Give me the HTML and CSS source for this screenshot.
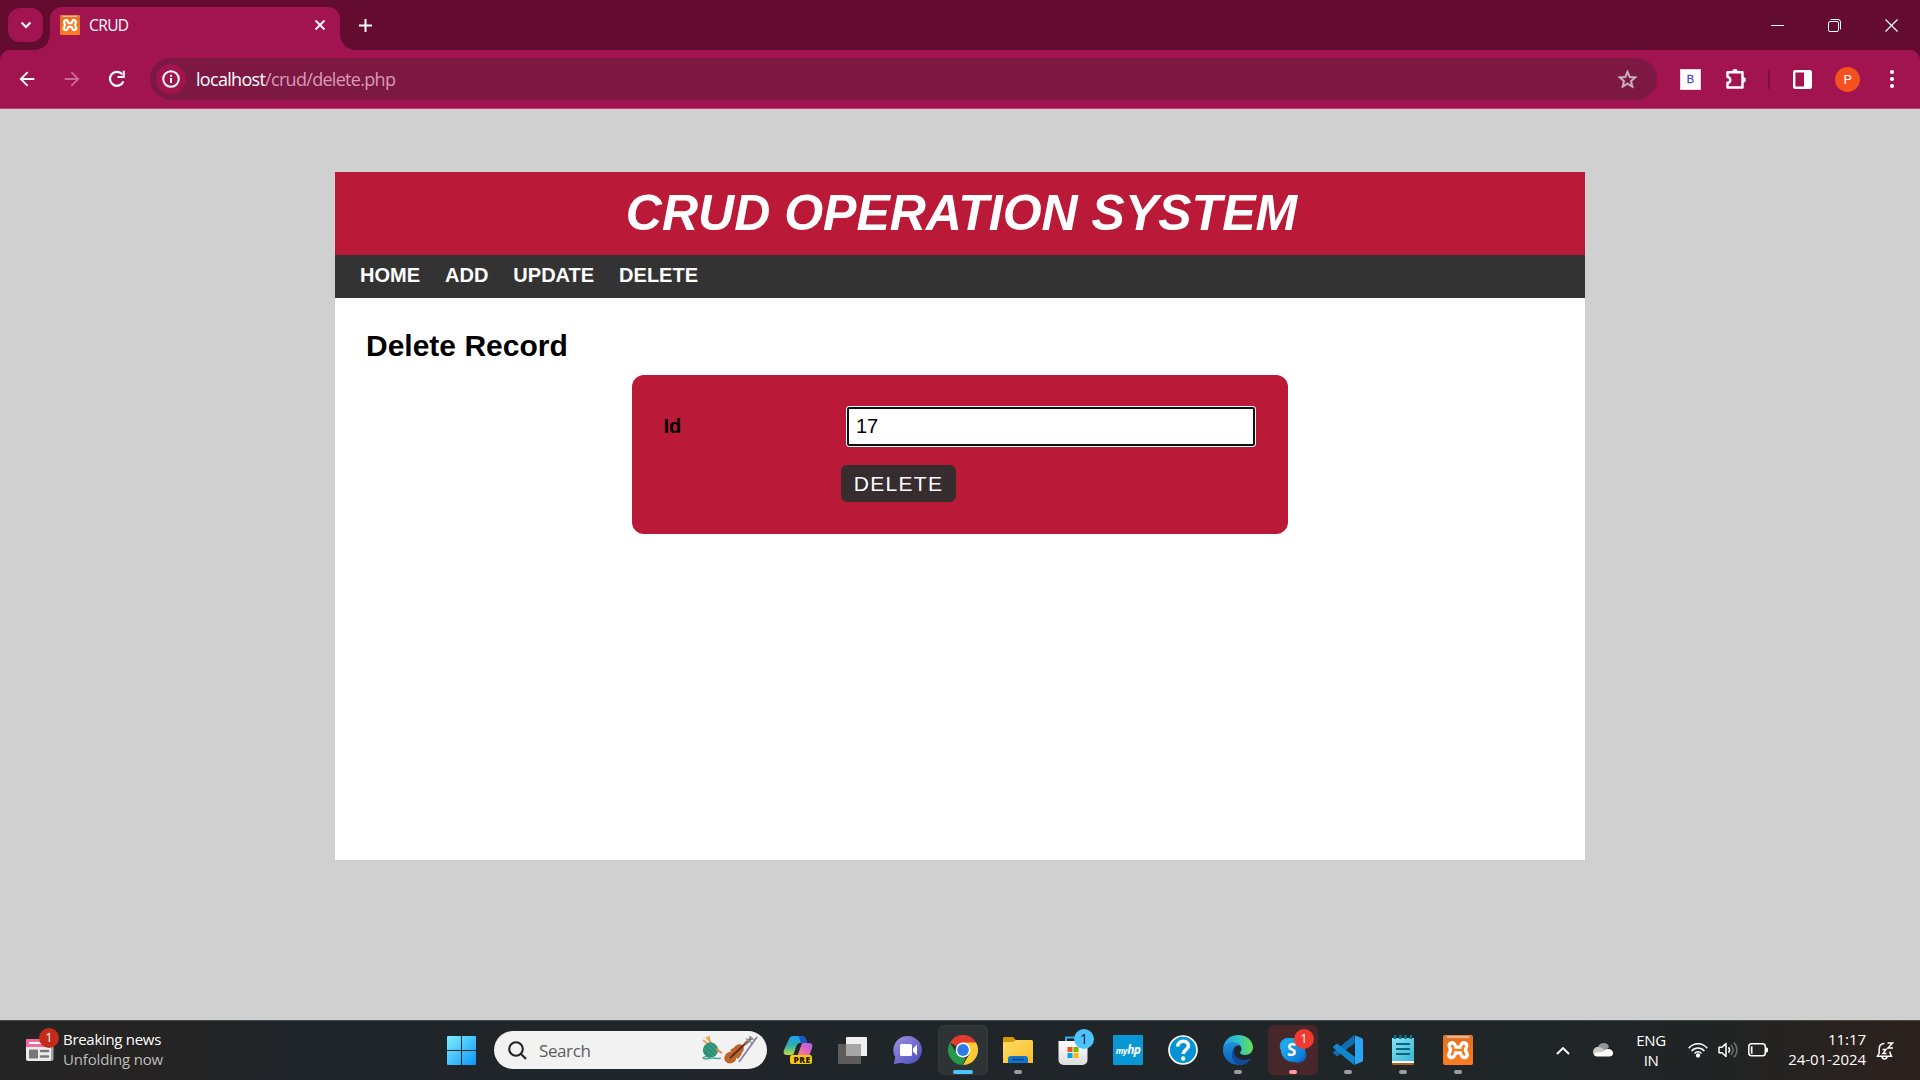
FILE: index.html
```html
<!DOCTYPE html>
<html lang="en">
<head>
<meta charset="utf-8">
<title>CRUD</title>
<link rel="stylesheet" href="styles.css">
</head>
<body>
<svg width="0" height="0" class="defs">
  <defs>
    <linearGradient id="win" x1="0" y1="0" x2="1" y2="1"><stop offset="0" stop-color="#7ff0ff"/><stop offset="1" stop-color="#0a94f8"/></linearGradient>
    <linearGradient id="orange" x1="0" y1="0" x2="0" y2="1"><stop offset="0" stop-color="#d5864a"/><stop offset=".18" stop-color="#ea6f1c"/><stop offset="1" stop-color="#fb7d22"/></linearGradient>
    <linearGradient id="copA" x1="0" y1="0" x2="0" y2="1"><stop offset="0" stop-color="#22a0ee"/><stop offset=".5" stop-color="#2bb0b0"/><stop offset="1" stop-color="#c4dc3a"/></linearGradient>
    <linearGradient id="copB" x1="1" y1="0" x2="0" y2="1"><stop offset="0" stop-color="#a65cf0"/><stop offset=".5" stop-color="#e368b8"/><stop offset="1" stop-color="#ff8a60"/></linearGradient>
    <linearGradient id="chat" x1="0" y1="0" x2="1" y2="1"><stop offset="0" stop-color="#a291df"/><stop offset="1" stop-color="#454bbd"/></linearGradient>
    <linearGradient id="folder" x1="0" y1="0" x2="1" y2="1"><stop offset="0" stop-color="#ffdc69"/><stop offset="1" stop-color="#f9bd25"/></linearGradient>
    <linearGradient id="edgeA" x1="0" y1="0" x2="1" y2="0"><stop offset="0" stop-color="#229fe3"/><stop offset=".5" stop-color="#31c4c7"/><stop offset="1" stop-color="#68e14d"/></linearGradient>
    <linearGradient id="edgeB" x1="0" y1="0" x2="0" y2="1"><stop offset="0" stop-color="#1b91dc"/><stop offset="1" stop-color="#0d62bd"/></linearGradient>
    <linearGradient id="note" x1="0" y1="0" x2="1" y2="1"><stop offset="0" stop-color="#86e3f4"/><stop offset="1" stop-color="#37b5d1"/></linearGradient>
    <linearGradient id="bag" x1="0" y1="0" x2="0" y2="1"><stop offset="0" stop-color="#fff"/><stop offset="1" stop-color="#dcdcdc"/></linearGradient>
    <linearGradient id="sky" x1="0" y1="0" x2="1" y2="1"><stop offset="0" stop-color="#27b8f2"/><stop offset="1" stop-color="#0870cd"/></linearGradient>
    <symbol id="xampp" viewBox="0 0 30 30">
      <rect width="30" height="30" rx="2" fill="url(#orange)"/>
      <path d="M4 2h22" stroke="#efc5a5" stroke-width="1.500"/>
      <g fill="none" stroke-linecap="round" stroke-linejoin="round">
        <path d="M9 10.500Q12 15 8.500 19.800M21 10.500Q18 15 21.500 19.800M10.500 15h9" stroke="#fff" stroke-width="9"/>
        <path d="M9.200 10.800Q12 15 8.700 19.500M20.800 10.800Q18 15 21.300 19.500M11 15h8" stroke="#f37a22" stroke-width="2.500"/>
      </g>
    </symbol>
  </defs>
</svg>

<header class="tabstrip">
  <button class="tab-search"><svg width="12" height="8" viewBox="0 0 12 8" fill="none" stroke="#fff" stroke-width="2"><path d="M1.500 1.500 6 6l4.500-4.500"/></svg></button>
  <div class="tab">
    <svg class="favicon" width="20" height="20"><use href="#xampp"/></svg>
    <span class="tab-title">CRUD</span>
    <svg class="tab-close" width="12" height="12" viewBox="0 0 12 12" stroke="#fff" stroke-width="1.800"><path d="m1.500 1.500 9 9m0-9-9 9"/></svg>
  </div>
  <svg class="new-tab" width="13" height="13" viewBox="0 0 13 13" stroke="#fff" stroke-width="2"><path d="M6.500 0v13M0 6.500h13"/></svg>
  <div class="window-controls">
    <svg width="13" height="13" viewBox="0 0 13 13" stroke="#fff"><path d="M0 6.500h13"/></svg>
    <svg width="13" height="13" viewBox="0 0 13 13" stroke="#fff" fill="none"><rect x=".5" y="2.500" width="10" height="10" rx="1.500"/><path d="M2.500.5H10A2.500 2.500 0 0 1 12.500 3v7.500"/></svg>
    <svg width="13" height="13" viewBox="0 0 13 13" stroke="#fff" stroke-width="1.200"><path d="m.5.5 12 12m0-12-12 12"/></svg>
  </div>
</header>

<div class="toolbar-wrap">
<div class="toolbar">
  <svg class="nav-icon" viewBox="0 0 24 24"><path d="M20 10.800H7.800l5.600-5.600L12 3.800 3.800 12l8.200 8.200 1.400-1.400-5.600-5.600H20z"/></svg>
  <svg class="nav-icon dim" viewBox="0 0 24 24"><path d="m12 3.800-1.400 1.400 5.600 5.600H4v2.400h12.200l-5.600 5.600 1.400 1.400 8.200-8.200z"/></svg>
  <svg class="nav-icon" viewBox="0 0 24 24" fill="none"><path d="M19 14.500A7.600 7.600 0 1 1 17.800 7" fill="none" stroke="#fff" stroke-width="2.400"/><path d="M20.500 3v8h-8V8.800h5.800V3z"/></svg>
  <div class="omnibox">
    <span class="site-info"><svg width="18" height="18" viewBox="0 0 18 18" fill="none" stroke="#fff" stroke-width="2"><circle cx="9" cy="9" r="7.800"/><path d="M9 8v5M9 4.700v2"/></svg></span>
    <span class="url"><b>localhost</b>/crud/delete.php</span>
    <svg class="star" width="23" height="23" viewBox="0 0 24 24" fill="#cbb7c0" stroke="#cbb7c0" stroke-width=".5"><path d="m22 9.240-7.190-.62L12 2 9.190 8.630 2 9.240l5.460 4.730L5.820 21 12 17.270 18.180 21l-1.630-7.030zM12 15.400l-3.760 2.270 1-4.280-3.320-2.880 4.380-.38L12 6.100l1.710 4.040 4.380.38-3.320 2.880 1 4.280z"/></svg>
  </div>
  <span class="ext-b">B</span>
  <svg class="puzzle" width="22" height="22" viewBox="0 0 22 22"><path d="M2.500 4.200h15v15.300h-15V14.800c1.500 0 2.800-1.200 2.800-2.900S4 9 2.500 9z" fill="none" stroke="#fff" stroke-width="2.400" stroke-linejoin="round"/><path d="M7.200 4a2.800 3 0 0 1 5.600 0zM18 9a2.800 2.800 0 0 1 0 5.600z" fill="#fff"/></svg>
  <span class="sep"></span>
  <svg class="panel-icon" width="19" height="19" viewBox="0 0 19 19"><rect x="1.200" y="1.200" width="16.600" height="16.600" rx="1" fill="none" stroke="#fff" stroke-width="2.400"/><path d="M11 1h7v17h-7z" fill="#fff"/></svg>
  <span class="avatar">P</span>
  <svg class="menu" width="6" height="20" viewBox="0 0 6 20" fill="#fff"><circle cx="3" cy="3" r="2.100"/><circle cx="3" cy="10" r="2.100"/><circle cx="3" cy="17" r="2.100"/></svg>
</div>
</div>

<main class="viewport">
  <div class="wrapper">
    <div class="site-header"><h1>CRUD OPERATION SYSTEM</h1></div>
    <nav class="site-menu"><a>HOME</a><a>ADD</a><a>UPDATE</a><a>DELETE</a></nav>
    <section class="content">
      <h2>Delete Record</h2>
      <form class="post-form">
        <div class="field"><label>Id</label><div class="input">17</div></div>
        <button type="button" class="submit">DELETE</button>
      </form>
    </section>
  </div>
</main>

<footer class="taskbar">
  <div class="widget">
    <div class="news">
      <svg width="28" height="22" viewBox="0 0 28 22"><path d="M22 3h5.500v17a2 2 0 0 1-2 2H22z" fill="#a5a5a5"/><rect width="25" height="22" rx="2" fill="#ececec"/><path d="M2 0h21a2 2 0 0 1 2 2v6H0V2a2 2 0 0 1 2-2z" fill="#f568a0"/><path d="M3 4h15" stroke="#fff" stroke-width="2"/><rect x="3" y="10.500" width="9" height="9" fill="#777" rx="1"/><path d="M15 12h7M15 17.500h7" stroke="#777" stroke-width="2.500" stroke-linecap="round"/></svg>
      <span class="badge red news-badge">1</span>
    </div>
    <div class="news-text"><span>Breaking news</span><span class="muted">Unfolding now</span></div>
  </div>
  <div class="apps">
    <div class="app start"><svg width="29" height="29" viewBox="0 0 29 29" fill="url(#win)"><path d="M1 0h13v14H0V1a1 1 0 0 1 1-1zM15 0h13a1 1 0 0 1 1 1v13H15zM0 15h14v14H1a1 1 0 0 1-1-1zM15 15h14v13a1 1 0 0 1-1 1H15z"/></svg></div>
    <div class="search">
      <svg width="19" height="19" viewBox="0 0 19 19" fill="none" stroke="#222" stroke-width="2.100"><circle cx="8" cy="8" r="6.800"/><path d="m12.800 12.800 5.200 5.200"/></svg>
      <span>Search</span>
      <svg class="art" width="56" height="28" viewBox="0 0 56 28">
        <path d="M8 21c-4-1-8 0-6.500 1.500C4 24 8 21.500 12 22s4 1 7 0" stroke="#3aa78d" fill="none" stroke-width="1.300"/>
        <path d="m4 1 15 16M7 0l1 10M1 4l12 10" stroke="#e8a14c" stroke-width="1.800"/>
        <circle cx="8.500" cy="14" r="7.600" fill="#2c9079"/><path d="m2 12 9 8M4 8l10 10M8 7l7 8" stroke="#4fb396" fill="none" stroke-width=".8"/>
        <path d="m14 13 6 4" stroke="#e88c46" stroke-width="2"/>
        <g fill="#bd652d"><ellipse cx="28.500" cy="21.500" rx="6.500" ry="5.800" transform="rotate(-42 28.500 21.500)"/><ellipse cx="36.500" cy="13.500" rx="5.800" ry="4.800" transform="rotate(-42 36.500 13.500)"/><path d="m28 14 5-3 7 7-4 5z"/></g>
        <path d="m28 22 17-16" stroke="#593022" stroke-width="1.800"/>
        <path d="m43 8 7-6.500" stroke="#8d6b58" stroke-width="3"/><path d="m44 2.500 6 5M47 0l5 4" stroke="#8894a5" stroke-width="1.500"/>
        <path d="M55 1 37 26" stroke="#8b7fa0" stroke-width="1.800"/>
      </svg>
    </div>
    <div class="app"><svg width="30" height="30" viewBox="0 0 30 30"><path d="M10 1h9c3 0 4 2 5 7h-7c-2 0-3 1-4 4l-2 6c-.6 2-2 2-4 2H4c-3 0-4-2-3-5L6 4c1-2 2-3 4-3z" fill="url(#copA)"/><path d="M14 1h5c3 0 4 2 5 7h-6c-2-4-1-7-4-7z" fill="#1957cd"/><path d="M20 8h6c3 0 4 2 3 5l-3 9H14l4-11c.500-2 1-3 2-3z" fill="url(#copB)"/><rect x="7" y="20" width="22" height="9" rx="2" fill="#fbc80b"/></svg><span class="pre">PRE</span></div>
    <div class="app"><svg width="30" height="30" viewBox="0 0 30 30"><path d="M9 2h19a1 1 0 0 1 1 1v18H8V3a1 1 0 0 1 1-1z" fill="#efefef"/><path d="M0 9h23v20H1a1 1 0 0 1-1-1z" fill="#5c5c5c"/><path d="M8 9h15v12H8z" fill="#a6a6a6"/></svg></div>
    <div class="app"><svg width="30" height="30" viewBox="0 0 30 30"><path d="M15 1a14 14 0 1 1-6 26.700L.8 29l1.500-7A14 14 0 0 1 15 1z" fill="url(#chat)"/><rect x="7" y="9" width="12" height="12" rx="1.500" fill="#fff"/><path d="m20 13.500 4-4v11l-4-4z" fill="#fff"/></svg></div>
    <div class="app active"><svg width="30" height="30" viewBox="0 0 30 30"><path d="M15 15 2 7.500A15 15 0 0 1 28 7.500z" fill="#e33b2e"/><path d="M15 7.500h13A15 15 0 0 1 15 30l6.500-11.300z" fill="#fcc934"/><path d="M2 7.500 8.500 18.700 15 22.500l3 .5-4 7A15 15 0 0 1 2 7.500z" fill="#24994c"/><circle cx="15" cy="15" r="7.400" fill="#fff"/><circle cx="15" cy="15" r="5.900" fill="#2b7de9"/></svg><i class="run wide"></i></div>
    <div class="app"><svg width="30" height="30" viewBox="0 0 30 30"><path d="M0 3a1 1 0 0 1 1-1h9l3 3h15v6H0z" fill="#d89705"/><path d="M0 7h10l3-2h15.500A1.500 1.500 0 0 1 30 6.500V28H0z" fill="url(#folder)"/><path d="M5 28v-4a3 3 0 0 1 3-3h14a3 3 0 0 1 3 3v4z" fill="#0d76ca"/><path d="M9 24.500h12" stroke="#053f79" stroke-width="1.500"/></svg><i class="run"></i></div>
    <div class="app"><svg width="30" height="30" viewBox="0 0 30 30"><path d="M8 7V2.500h12" fill="none" stroke="#37aee8" stroke-width="2"/><path d="M.5 6h29v19a5 5 0 0 1-5 5h-19a5 5 0 0 1-5-5z" fill="url(#bag)"/><path d="M9.500 12h5v5h-5z" fill="#f05024"/><path d="M15.500 12h5v5h-5z" fill="#7db801"/><path d="M9.500 18h5v5h-5z" fill="#02a3ed"/><path d="M15.500 18h5v5h-5z" fill="#feb802"/></svg><span class="badge blue">1</span></div>
    <div class="app"><span class="myhp">my<em>hp</em></span></div>
    <div class="app"><svg width="30" height="30" viewBox="0 0 30 30"><circle cx="15" cy="15" r="14" fill="#0593d3" stroke="#fff" stroke-width="1.700"/><path d="M9.800 11.500c0-7 10.700-6.800 10.700-.8 0 4-5.200 4-5.200 8.300" fill="none" stroke="#fff" stroke-width="3.500"/><circle cx="15.200" cy="23.500" r="2.200" fill="#fff"/></svg></div>
    <div class="app"><svg width="30" height="30" viewBox="0 0 30 30"><path d="M0 14C1 5 7 0 15 0c9 0 15 6 15 12.500 0 4.500-3.500 7.500-8 7.500-3 0-5-1-5-2.200 0-.8 1.500-1.600 1.500-3.800C18.500 10 14 8 10 8c-5 0-9 3-10 6z" fill="url(#edgeA)"/><path d="M0 15c0-5 4.500-8 9.500-8 4 0 7 1.500 8.500 4-4-1.500-8 1-8 6.500 0 6 5 11 11 11-2 1-4 1.500-6 1.500A15 15 0 0 1 0 15z" fill="url(#edgeB)"/><path d="M12 13c-3 6 2 12 9 12 3 0 5-1 6-1.500.500-.3 1 .2.700.7C25.500 28 21 30 17 30c-8-1-11-13-5-17z" fill="#114a9a"/></svg><i class="run"></i></div>
    <div class="app alert"><svg width="28" height="28" viewBox="0 0 28 28"><circle cx="9" cy="10" r="8.300" fill="#1a9fe8"/><circle cx="19" cy="18.500" r="8.500" fill="#0a6cc9"/><circle cx="14" cy="14" r="12" fill="url(#sky)"/></svg><span class="skype">S</span><span class="badge red">1</span><i class="run pink"></i></div>
    <div class="app"><svg width="30" height="30" viewBox="0 0 30 30"><path d="m22 8-18 13.500-3.500-3a1 1 0 0 1 0-1.500L21 0z" fill="#0f6cae"/><path d="M22 22 4 8.500.500 11.300a1 1 0 0 0 0 1.700L21 30z" fill="#1386cd"/><path d="m21 0 7.500 3A2 2 0 0 1 30 5v20a2 2 0 0 1-1.500 2L21 30c1-.5 1-1 1-2V2c0-1 0-1.500-1-2z" fill="#2aa5f4"/></svg><i class="run"></i></div>
    <div class="app"><svg width="22" height="30" viewBox="0 0 22 30"><path d="M0 26h22v3a1 1 0 0 1-1 1H1a1 1 0 0 1-1-1z" fill="#a8621e"/><path d="M0 24h22v4H0z" fill="#f5f5f5"/><path d="M0 3h22v23H0z" fill="url(#note)"/><path d="M4 9h14M4 14h14M4 19h14" stroke="#0b6581" stroke-width="2"/><path d="M3 0v4M8.300 0v4M13.600 0v4M19 0v4" stroke="#087299" stroke-width="2.400"/></svg><i class="run"></i></div>
    <div class="app"><svg width="30" height="30"><use href="#xampp"/></svg><i class="run"></i></div>
  </div>
  <div class="tray">
    <svg class="chev" width="14" height="9" viewBox="0 0 14 9" fill="none" stroke="#fff" stroke-width="1.900"><path d="m1 8 6-6 6 6"/></svg>
    <svg class="cloud" width="20" height="14" viewBox="0 0 20 14"><path d="M4 8C4 3 7 0 10.500 0 14 0 15.500 2 16 4l-5 5z" fill="#949494"/><path d="M0 9c0-3 2-5 5-5 4 0 7 3 9 6L3 13C1 12 0 11 0 9z" fill="#c9c9c9"/><path d="M1 11c3-3 8-1 10-3 4-4 9-1 9 2 0 2-1 3.500-4 3.500H4c-2 0-3-1-3-2.500z" fill="#fff"/></svg>
    <div class="lang"><span>ENG</span><span>IN</span></div>
    <svg class="wifi" width="20" height="16" viewBox="0 0 20 16" fill="none" stroke="#fff" stroke-width="1.500"><path d="M.7 6.200c5.200-5.900 13.400-5.900 18.600 0M3.600 8.900c3.600-4 9.200-4 12.800 0M6.500 11.500c2-2.200 5-2.200 7 0"/><circle cx="10" cy="13.500" r="1.400" fill="#fff"/></svg>
    <svg class="vol" width="21" height="18" viewBox="0 0 21 18" fill="none" stroke="#fff" stroke-width="1.500"><path d="M1 6.300h3L8 2.500v13l-4-3.800H1z" stroke-linejoin="round"/><path d="M10.500 6.300c1.300 1.600 1.300 3.800 0 5.400"/><path d="M13 4c2.500 3 2.500 7 0 10M15.800 1.500c4.200 4.500 4.200 10.500 0 15" stroke="#6d6e6f"/></svg>
    <svg class="bat" width="20" height="14" viewBox="0 0 20 14"><rect x=".8" y=".8" width="16.500" height="12" rx="2.800" fill="none" stroke="#fff" stroke-width="1.500"/><path d="M18 4.500h1l1 1v3l-1 1h-1zM2.800 3.500 4.500 3v8l-1.700-.5z" fill="#fff"/></svg>
    <div class="clock"><span>11:17</span><span>24-01-2024</span></div>
    <svg class="bell" width="18" height="19" viewBox="0 0 18 19" fill="none" stroke="#fff" stroke-width="1.500"><path d="M8.500 2.500C5 2.500 3.200 5 3.200 8v4L1.500 15.200h14L14 12v-1.500M6 15.800c.5 2.800 4.500 2.800 5 0M11.500 2h5l-4.500 5h5M6.500 8.500h3.500L7 12.500h3.500"/></svg>
  </div>
</footer>
</body>
</html>
```
FILE: styles.css
```css
* { box-sizing: border-box; }
body {
  margin: 0;
  width: 1920px;
  height: 1080px;
  overflow: hidden;
  display: flex;
  flex-direction: column;
  background: #d0d0d0;
  font-family: "Open Sans", "Noto Sans", sans-serif;
}
svg { display: block; flex: none; }
.defs { position: absolute; }
button { border: 0; padding: 0; }

/* Browser tab strip */
.tabstrip {
  height: 50px;
  background: #630c30;
  display: flex;
  align-items: center;
  padding-left: 8px;
  flex: none;
}
.tab-search {
  width: 35px;
  height: 34px;
  border-radius: 12px;
  background: #a2144f;
  display: flex;
  align-items: center;
  justify-content: center;
}
.tab {
  position: relative;
  align-self: flex-end;
  width: 290px;
  height: 43px;
  margin-left: 7px;
  padding: 0 14px 7px 10px;
  border-radius: 12px 12px 0 0;
  background: #a2144f;
  display: flex;
  align-items: center;
  color: #fff;
}
.tab::before, .tab::after {
  content: "";
  position: absolute;
  bottom: 0;
  width: 15px;
  height: 15px;
}
.tab::before { left: -15px; background: radial-gradient(circle at 0 0, transparent 14.500px, #a2144f 15px); }
.tab::after { right: -15px; background: radial-gradient(circle at 100% 0, transparent 14.500px, #a2144f 15px); }
.tab-title { margin-left: 9px; font-size: 15.500px; letter-spacing: -0.6px; }
.tab-close { margin-left: auto; }
.new-tab { margin-left: 19px; }
.window-controls { margin-left: auto; margin-right: 22px; display: flex; gap: 44px; }

/* Browser toolbar */
.toolbar-wrap { background: #630c30; flex: none; }
.toolbar {
  height: 59px;
  background: #a2144f;
  border-bottom: 1px solid #c2487c;
  border-radius: 10px 10px 0 0;
  display: flex;
  align-items: center;
  padding-left: 16px;
}
.nav-icon { width: 22px; height: 22px; fill: #fff; margin-right: 23px; }
.nav-icon.dim { fill: #cb6995; }
.omnibox {
  width: 1507px;
  height: 42px;
  margin-left: -1px;
  padding: 0 18px 0 6px;
  border-radius: 21px;
  background: #7d1843;
  display: flex;
  align-items: center;
}
.site-info {
  width: 30px;
  height: 30px;
  border-radius: 50%;
  background: #a2144f;
  display: flex;
  align-items: center;
  justify-content: center;
}
.url { margin-left: 10px; color: #d79bb6; font-size: 18px; letter-spacing: -0.7px; }
.url b { font-weight: 400; color: #fff; }
.star { margin-left: auto; }
.ext-b {
  width: 21px;
  height: 21px;
  margin-left: 23px;
  border: 1px solid #e6d5e2;
  background: #fff;
  color: #4c46b8;
  font: 11px/19px "Liberation Sans", sans-serif;
  text-align: center;
  -webkit-text-stroke: 0.3px #4c46b8;
}
.puzzle { margin-left: 24px; }
.sep { width: 2px; height: 20px; margin-left: 21px; background: #7d1040; }
.panel-icon { margin-left: 23px; }
.avatar {
  width: 25px;
  height: 25px;
  margin-left: 23px;
  border-radius: 50%;
  background: #f4511e;
  color: #fff;
  font: 13px/25px Roboto, sans-serif;
  text-align: center;
}
.menu { margin-left: 29px; }

/* Page */
.viewport {
  height: 911px;
  padding-top: 63px;
  flex: none;
  font-family: "Liberation Sans", Arial, sans-serif;
}
.wrapper { width: 1250px; height: 688px; margin: 0 auto; background: #fff; }
.site-header { height: 83px; background: #ba1a38; padding: 13px 0 0 3px; }
.site-header h1 {
  margin: 0;
  font-size: 50px;
  line-height: 57px;
  font-style: italic;
  color: #fff;
  text-align: center;
}
.site-menu {
  height: 43px;
  padding-left: 25px;
  display: flex;
  gap: 25px;
  background: #333;
  color: #fff;
  font-size: 20px;
  font-weight: 700;
  line-height: 41px;
}
.content { padding: 31px; }
.content h2 { margin: 0 0 12px; font-size: 30px; line-height: 34px; }
.post-form {
  width: 656px;
  height: 159px;
  margin: 0 auto;
  padding: 32px 32px;
  border-radius: 12px;
  background: #ba1a38;
  font-size: 20px;
}
.field { display: flex; justify-content: space-between; }
.field label { font-weight: 700; line-height: 38px; margin-left: -0.5px; }
.input {
  width: 408px;
  height: 39px;
  margin-right: 1px;
  padding-left: 7px;
  border: 2px solid #101010;
  border-radius: 2px;
  outline: 1px solid #fff;
  background: #fff;
  line-height: 34px;
}
.submit {
  display: block;
  width: 115px;
  height: 37px;
  margin: 19px 0 0 177px;
  border-radius: 6px;
  background: #372d2e;
  color: #fff;
  font: 21px/36px "Liberation Sans", Arial, sans-serif;
  letter-spacing: 1.3px;
}

/* Desktop taskbar */
.taskbar {
  height: 60px;
  flex: none;
  display: flex;
  border-top: 1px solid #454a4b;
  background: linear-gradient(90deg, #252525 0, #262423 150px, #20252a 300px, #202528 1500px, #202425 1700px, #2a221e 1860px, #2b211e);
  color: #fff;
  font-size: 15px;
}
.widget { width: 436px; padding: 8px 0 0 26px; display: flex; }
.news { position: relative; padding-top: 10px; }
.badge {
  position: absolute;
  width: 20px;
  height: 20px;
  border-radius: 50%;
  font-size: 12px;
  line-height: 19px;
  text-align: center;
}
.badge.red { background: #f03a30; color: #fff; }
.badge.blue { background: #4cc2ff; color: #10212c; font-size: 14px; }
.badge.news-badge { background: #c42b1c; left: 13px; top: -1px; font-size: 13px; }
.news-text, .lang, .clock { display: flex; flex-direction: column; line-height: 20px; }
.news-text { margin-left: 9px; letter-spacing: -0.3px; }
.muted { color: #bdbdbd; letter-spacing: -0.15px; }
.apps { display: flex; padding-top: 4px; }
.app {
  position: relative;
  width: 50px;
  height: 50px;
  margin-right: 5px;
  border-radius: 6px;
  display: flex;
  align-items: center;
  justify-content: center;
}
.app.start { margin-right: 8px; }
.app.active { background: #2e3336; border: 1px solid #363b3e; }
.app.alert { background: #472729; }
.app .badge { right: 4px; top: 4px; }
.run {
  position: absolute;
  left: 21px;
  bottom: 1px;
  width: 8px;
  height: 4px;
  border-radius: 2px;
  background: #9a9c9e;
}
.run.wide { width: 20px; left: 14px; bottom: 0; background: #4cc2ff; }
.run.pink { background: #ff99a4; }
.search {
  width: 273px;
  height: 38px;
  margin: 6px 6px 0 0;
  padding: 0 9px 0 14px;
  border-radius: 19px;
  background: #f2f2f2;
  color: #5c5c5c;
  display: flex;
  align-items: center;
  font-size: 17px;
  letter-spacing: -0.4px;
}
.search span { margin-left: 12px; }
.art { margin-left: auto; }
.pre { position: absolute; left: 18px; top: 30px; width: 22px; font-size: 8.500px; line-height: 9px; font-weight: 800; color: #1c1a10; text-align: center; letter-spacing: 0.4px; }
.myhp {
  width: 30px;
  height: 30px;
  border-radius: 1px;
  background: #0896d5;
  color: #fff;
  font: italic 700 8.500px/30px "Open Sans", sans-serif;
  text-align: center;
  letter-spacing: -0.3px;
}
.myhp em { font-size: 12px; letter-spacing: -0.6px; }
.skype { position: absolute; left: 19px; top: 14px; font-size: 17px; line-height: 22px; font-weight: 700; }
.tray { margin-left: auto; display: flex; padding-right: 26px; }
.chev { margin-top: 25px; }
.cloud { margin: 22px 0 0 23px; }
.lang { width: 40px; margin: 9px 0 0 18px; align-items: center; letter-spacing: -0.4px; }
.wifi { margin: 21px 0 0 17px; }
.vol { margin: 20px 0 0 10px; }
.bat { margin: 22px 0 0 9px; }
.clock { width: 88px; margin: 8px 0 0 10px; align-items: flex-end; letter-spacing: -0.05px; }
.bell { margin: 20px 0 0 10px; }
```
